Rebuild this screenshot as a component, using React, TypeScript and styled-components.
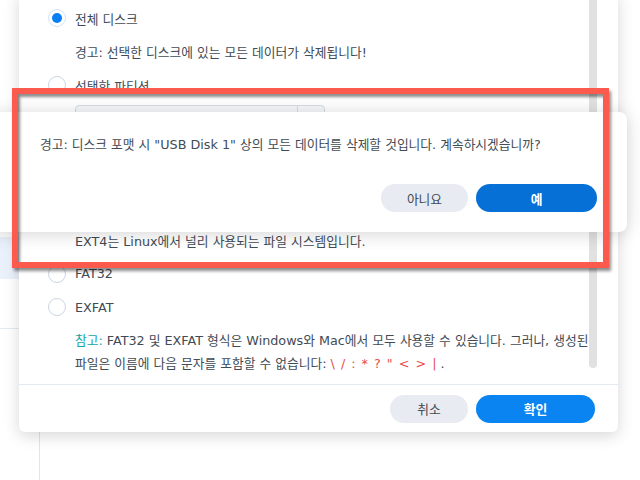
import React from "react";
import styled, { createGlobalStyle } from "styled-components";

const GlobalStyle = createGlobalStyle`
  html, body {
    margin: 0;
    padding: 0;
    background: #ffffff;
  }
  body {
    font-family: "DejaVu Sans", "Noto Sans CJK KR", sans-serif;
    color: #414b55;
  }
`;

const Page = styled.div`
  position: relative;
  width: 640px;
  height: 480px;
  overflow: hidden;
  background: #ffffff;
  display: grid;
  grid-template-columns: 40px 1fr;
`;

const Sidebar = styled.div`
  display: flex;
  flex-direction: column;
  border-right: 1px solid #dfe5ee;
  padding-top: 237px;
`;

const NavItem = styled.div`
  height: 42px;
  background: #eaf1fb;
`;

const NavDivider = styled.div`
  margin-top: 49px;
  height: 1px;
  background: #e3e9f1;
`;

const Window = styled.div`
  position: absolute;
  left: 19px;
  top: -8px;
  width: 599px;
  height: 440px;
  background: #ffffff;
  border-radius: 6px;
  box-shadow: 0 4px 16px rgba(0, 0, 0, 0.16);
  display: flex;
  flex-direction: column;
`;

const Body = styled.div`
  position: relative;
  flex: 1;
  overflow: hidden;
  padding: 9px 0 0 29px;
`;

const Scrollbar = styled.div`
  position: absolute;
  right: 21px;
  top: 0;
  bottom: 16px;
  width: 8px;
  border-radius: 4px;
  background: #e1e1e1;
`;

const Row = styled.div<{ $h: number }>`
  display: flex;
  align-items: center;
  gap: 9px;
  height: ${(p) => p.$h}px;
  font-size: 12.75px;
`;

const Radio = styled.span<{ $on?: boolean }>`
  box-sizing: border-box;
  width: 18px;
  height: 18px;
  border-radius: 50%;
  border: 1px solid ${(p) => (p.$on ? "#d5e3f5" : "#ccd6e2")};
  background: #ffffff;
  display: flex;
  align-items: center;
  justify-content: center;
  flex-shrink: 0;
  &::after {
    content: "";
    display: ${(p) => (p.$on ? "block" : "none")};
    width: 10px;
    height: 10px;
    border-radius: 50%;
    background: #0a7ff5;
  }
`;

const Hint = styled.div<{ $h: number }>`
  display: flex;
  align-items: center;
  height: ${(p) => p.$h}px;
  padding-left: 27px;
  font-size: 12.75px;
`;

const SelectRow = styled.div`
  height: 87px;
  padding: 3px 0 0 27px;
  box-sizing: border-box;
`;

const Select = styled.div`
  box-sizing: border-box;
  width: 250px;
  height: 30px;
  border: 1px solid #d3dbe5;
  border-radius: 4px;
  background: #f5f7fa;
  display: flex;
  justify-content: flex-end;
`;

const SelectArrow = styled.div`
  width: 26px;
  border-left: 1px solid #d3dbe5;
`;

const Note = styled.p`
  margin: 5px 0 0;
  padding-left: 27px;
  width: 520px;
  font-size: 12.75px;
  line-height: 23px;
  word-break: keep-all;
`;

const NoteLabel = styled.span`
  color: #16a3a3;
`;

const Forbidden = styled.span`
  color: #ea4b4b;
  word-spacing: 2px;
`;

const Footer = styled.div`
  height: 48px;
  box-sizing: border-box;
  border-top: 1px solid #e3e9f1;
  display: flex;
  align-items: center;
  justify-content: flex-end;
  gap: 8px;
  padding-right: 23px;
`;

const Button = styled.button<{ $primary?: boolean; $w: number; $dark?: boolean }>`
  width: ${(p) => p.$w}px;
  height: 28px;
  border: none;
  border-radius: 14px;
  font-family: inherit;
  font-size: 12.75px;
  font-weight: ${(p) => (p.$primary ? 700 : 400)};
  color: ${(p) => (p.$primary ? "#ffffff" : "#414b55")};
  background: ${(p) =>
    p.$primary ? (p.$dark ? "#0670d6" : "#0a84f0") : "#e8ecf2"};
  padding: 0;
`;

const Confirm = styled.div`
  position: absolute;
  left: -10px;
  top: 112px;
  width: 637px;
  height: 120px;
  box-sizing: border-box;
  background: #ffffff;
  border-radius: 8px;
  box-shadow: 0 2px 18px rgba(0, 0, 0, 0.17);
  display: flex;
  flex-direction: column;
  justify-content: space-between;
  padding: 24px 30px 20px 50px;
`;

const ConfirmText = styled.div`
  font-size: 12.75px;
  line-height: 18px;
`;

const ConfirmActions = styled.div`
  display: flex;
  justify-content: flex-end;
  gap: 8px;
`;

const Highlight = styled.div`
  position: absolute;
  left: 12px;
  top: 88px;
  width: 597px;
  height: 180px;
  box-sizing: border-box;
  border: 6px solid #fc5a4c;
  box-shadow: 2px 3px 3px rgba(0, 0, 0, 0.45),
    inset 2px 3px 3px rgba(0, 0, 0, 0.45);
  pointer-events: none;
`;

export default function App() {
  return (
    <>
      <GlobalStyle />
      <Page>
        <Sidebar>
          <NavItem />
          <NavDivider />
        </Sidebar>
        <div />

        <Window>
          <Body>
            <Scrollbar />
            <Row $h={34}>
              <Radio $on />
              전체 디스크
            </Row>
            <Hint $h={33}>경고: 선택한 디스크에 있는 모든 데이터가 삭제됩니다!</Hint>
            <Row $h={34}>
              <Radio />
              선택한 파티션
            </Row>
            <SelectRow>
              <Select>
                <SelectArrow />
              </Select>
            </SelectRow>
            <Row $h={34}>
              <Radio />
              EXT4
            </Row>
            <Hint $h={34}>EXT4는 Linux에서 널리 사용되는 파일 시스템입니다.</Hint>
            <Row $h={33}>
              <Radio />
              FAT32
            </Row>
            <Row $h={34}>
              <Radio />
              EXFAT
            </Row>
            <Note>
              <NoteLabel>참고:</NoteLabel> FAT32 및 EXFAT 형식은 Windows와 Mac에서 모두 사용할 수
              있습니다. 그러나, 생성된 파일은 이름에 다음 문자를 포함할 수 없습니다:{" "}
              <Forbidden>\ / : * ? " &lt; &gt; |</Forbidden> .
            </Note>
          </Body>
          <Footer>
            <Button $w={78}>취소</Button>
            <Button $w={119} $primary>
              확인
            </Button>
          </Footer>
        </Window>

        <Confirm>
          <ConfirmText>
            경고: 디스크 포맷 시 "USB Disk 1" 상의 모든 데이터를 삭제할 것입니다. 계속하시겠습니까?
          </ConfirmText>
          <ConfirmActions>
            <Button $w={87}>아니요</Button>
            <Button $w={121} $primary $dark>
              예
            </Button>
          </ConfirmActions>
        </Confirm>

        <Highlight />
      </Page>
    </>
  );
}
